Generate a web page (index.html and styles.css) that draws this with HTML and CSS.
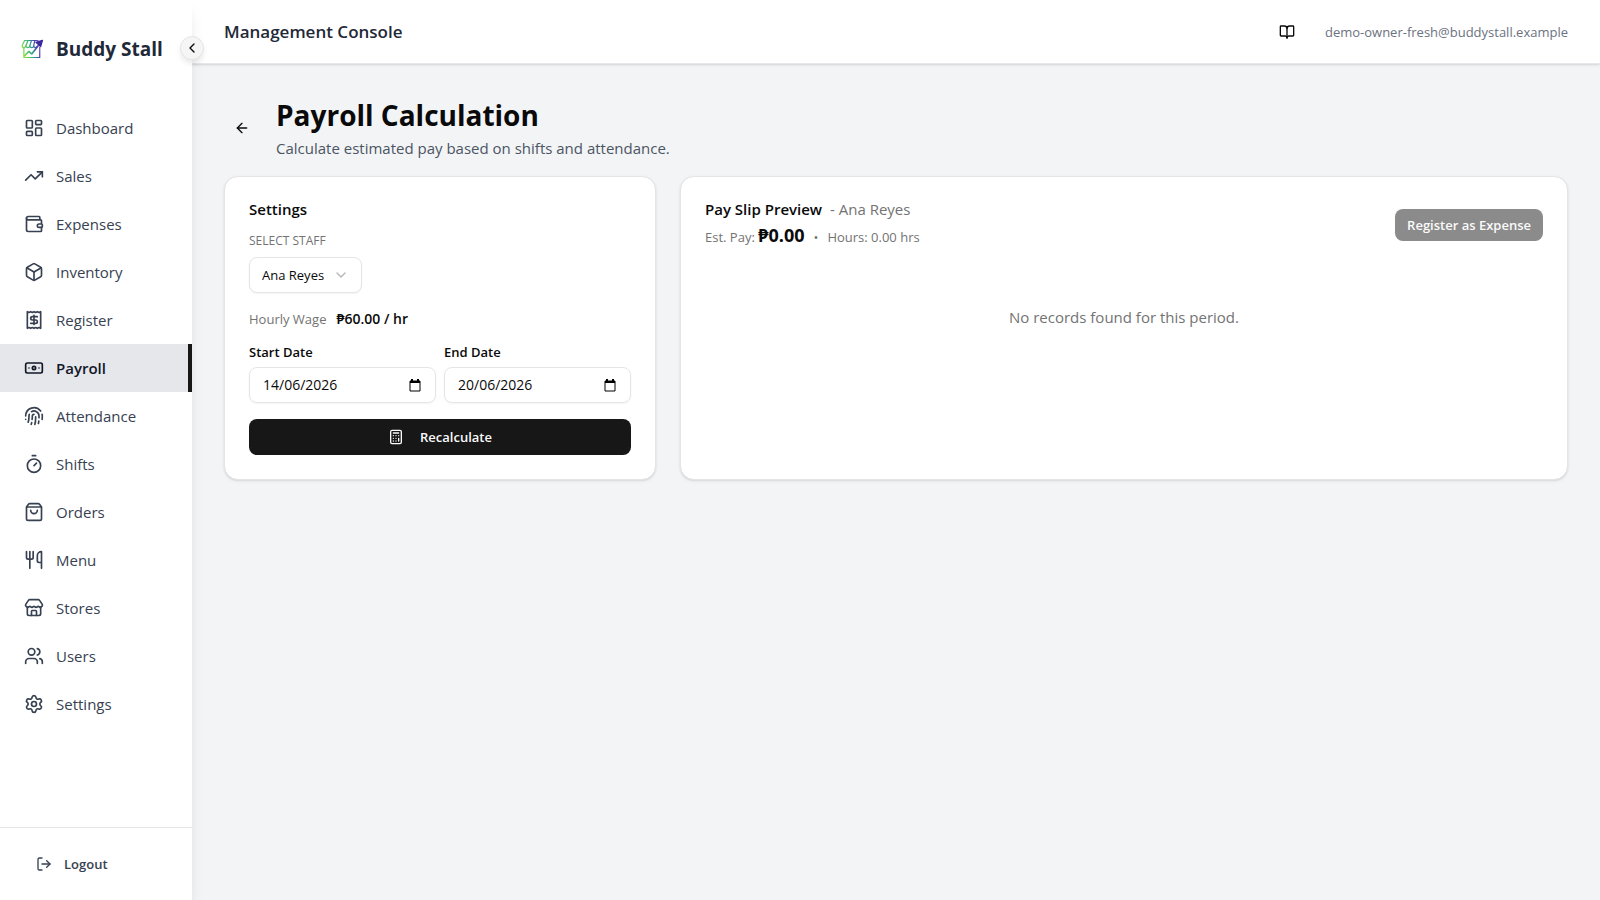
FILE: index.html
```html
<!DOCTYPE html>
<html lang="en">
<head>
    <meta charset="UTF-8">
    <meta name="viewport" content="width=device-width, initial-scale=1.0">
    <title>Payroll Calculation - Buddy Stall</title>
    <link rel="stylesheet" href="styles.css">
</head>
<body>
    <aside class="sidebar">
        <div class="brand">
            <svg class="brand-logo" viewBox="-2 -1 26 26" fill="none" stroke="url(#brandGradient)" stroke-width="1.3" stroke-linecap="round" stroke-linejoin="round">
                <defs>
                    <linearGradient id="brandGradient" gradientUnits="userSpaceOnUse" x1="1" y1="16" x2="22" y2="10">
                        <stop offset="0" stop-color="#8be03c"/>
                        <stop offset="0.45" stop-color="#2fa88c"/>
                        <stop offset="0.75" stop-color="#4b3bb0"/>
                        <stop offset="1" stop-color="#8b5fd0"/>
                    </linearGradient>
                </defs>
                <path d="M3 2.8h14.5M3 2.8.3 8.2c0 3 3.6 3 4.2 0 0 3 4 3 4.2 0 0 3 4 3 4.2 0 .2 3 3 3 3.4 1"/>
                <path d="M6.6 2.8 4.5 8.2M10.4 2.8 8.7 8.2M14 2.8l-1.1 5.4"/>
                <path d="M2.2 11v10.2h17.2V10"/>
                <path d="m2.8 19.5 4.7-4.8 3.2 2.6 8.6-11" stroke-width="1.8"/>
                <path d="m22.4 2.6-7.2 2.2 5.2 4.5z" fill="#3a2a9c" stroke="#3a2a9c"/>
            </svg>
            <span class="brand-name">Buddy Stall</span>
        </div>
        <button class="collapse-button" type="button" aria-label="Collapse sidebar">
            <svg class="icon icon-small" viewBox="0 0 24 24"><path d="m15 18-6-6 6-6"/></svg>
        </button>

        <nav class="nav">
            <a class="nav-item" href="#">
                <svg class="icon" viewBox="0 0 24 24"><rect width="7" height="9" x="3" y="3" rx="1"/><rect width="7" height="5" x="14" y="3" rx="1"/><rect width="7" height="9" x="14" y="12" rx="1"/><rect width="7" height="5" x="3" y="16" rx="1"/></svg>
                <span>Dashboard</span>
            </a>
            <a class="nav-item" href="#">
                <svg class="icon" viewBox="0 0 24 24"><path d="M16 7h6v6"/><path d="m22 7-8.5 8.5-5-5L2 17"/></svg>
                <span>Sales</span>
            </a>
            <a class="nav-item" href="#">
                <svg class="icon" viewBox="0 0 24 24"><path d="M19 7V4a1 1 0 0 0-1-1H5a2 2 0 0 0 0 4h15a1 1 0 0 1 1 1v4h-3a2 2 0 0 0 0 4h3a1 1 0 0 0 1-1v-2a1 1 0 0 0-1-1"/><path d="M3 5v14a2 2 0 0 0 2 2h15a1 1 0 0 0 1-1v-4"/></svg>
                <span>Expenses</span>
            </a>
            <a class="nav-item" href="#">
                <svg class="icon" viewBox="0 0 24 24"><path d="M21 8a2 2 0 0 0-1-1.73l-7-4a2 2 0 0 0-2 0l-7 4A2 2 0 0 0 3 8v8a2 2 0 0 0 1 1.73l7 4a2 2 0 0 0 2 0l7-4A2 2 0 0 0 21 16Z"/><path d="m3.3 7 8.7 5 8.7-5"/><path d="M12 22V12"/></svg>
                <span>Inventory</span>
            </a>
            <a class="nav-item" href="#">
                <svg class="icon" viewBox="0 0 24 24"><path d="M4 2v20l2-1 2 1 2-1 2 1 2-1 2 1 2-1 2 1V2l-2 1-2-1-2 1-2-1-2 1-2-1-2 1Z"/><path d="M16 8h-6a2 2 0 1 0 0 4h4a2 2 0 1 1 0 4H8"/><path d="M12 17.5v-11"/></svg>
                <span>Register</span>
            </a>
            <a class="nav-item active" href="#">
                <svg class="icon" viewBox="0 0 24 24"><rect width="20" height="12" x="2" y="6" rx="2"/><circle cx="12" cy="12" r="2"/><path d="M6 12h.01M18 12h.01"/></svg>
                <span>Payroll</span>
            </a>
            <a class="nav-item" href="#">
                <svg class="icon" viewBox="0 0 24 24"><path d="M12 10a2 2 0 0 0-2 2c0 1.02-.1 2.51-.26 4"/><path d="M14 13.12c0 2.38 0 6.38-1 8.88"/><path d="M17.29 21.02c.12-.6.43-2.3.5-3.02"/><path d="M2 12a10 10 0 0 1 18-6"/><path d="M2 16h.01"/><path d="M21.8 16c.2-2 .131-5.354 0-6"/><path d="M5 19.5C5.5 18 6 15 6 12a6 6 0 0 1 .34-2"/><path d="M8.65 22c.21-.66.45-1.32.57-2"/><path d="M9 6.8a6 6 0 0 1 9 5.2v2"/></svg>
                <span>Attendance</span>
            </a>
            <a class="nav-item" href="#">
                <svg class="icon" viewBox="0 0 24 24"><path d="M10 2h4"/><path d="m12 14 3-3"/><circle cx="12" cy="14" r="8"/></svg>
                <span>Shifts</span>
            </a>
            <a class="nav-item" href="#">
                <svg class="icon" viewBox="0 0 24 24"><path d="M16 10a4 4 0 0 1-8 0"/><path d="M3.103 6.034h17.794"/><path d="M3.4 5.467a2 2 0 0 0-.4 1.2V20a2 2 0 0 0 2 2h14a2 2 0 0 0 2-2V6.667a2 2 0 0 0-.4-1.2l-2-2.667A2 2 0 0 0 17 2H7a2 2 0 0 0-1.6.8z"/></svg>
                <span>Orders</span>
            </a>
            <a class="nav-item" href="#">
                <svg class="icon" viewBox="0 0 24 24"><path d="M3 2v7c0 1.1.9 2 2 2h4a2 2 0 0 0 2-2V2"/><path d="M7 2v20"/><path d="M21 15V2a5 5 0 0 0-5 5v6c0 1.1.9 2 2 2h3Zm0 0v7"/></svg>
                <span>Menu</span>
            </a>
            <a class="nav-item" href="#">
                <svg class="icon" viewBox="0 0 24 24"><path d="M15 21v-5a1 1 0 0 0-1-1h-4a1 1 0 0 0-1 1v5"/><path d="M17.774 10.31a1.12 1.12 0 0 0-1.549 0 2.5 2.5 0 0 1-3.451 0 1.12 1.12 0 0 0-1.548 0 2.5 2.5 0 0 1-3.452 0 1.12 1.12 0 0 0-1.549 0 2.5 2.5 0 0 1-3.77-3.248l2.889-4.184A2 2 0 0 1 7 2h10a2 2 0 0 1 1.653.873l2.895 4.192a2.5 2.5 0 0 1-3.774 3.244"/><path d="M4 10.95V19a2 2 0 0 0 2 2h12a2 2 0 0 0 2-2v-8.05"/></svg>
                <span>Stores</span>
            </a>
            <a class="nav-item" href="#">
                <svg class="icon" viewBox="0 0 24 24"><path d="M16 21v-2a4 4 0 0 0-4-4H6a4 4 0 0 0-4 4v2"/><path d="M16 3.128a4 4 0 0 1 0 7.744"/><path d="M22 21v-2a4 4 0 0 0-3-3.87"/><circle cx="9" cy="7" r="4"/></svg>
                <span>Users</span>
            </a>
            <a class="nav-item" href="#">
                <svg class="icon" viewBox="0 0 24 24"><path d="M9.671 4.136a2.34 2.34 0 0 1 4.659 0 2.34 2.34 0 0 0 3.319 1.915 2.34 2.34 0 0 1 2.33 4.033 2.34 2.34 0 0 0 0 3.831 2.34 2.34 0 0 1-2.33 4.033 2.34 2.34 0 0 0-3.319 1.915 2.34 2.34 0 0 1-4.659 0 2.34 2.34 0 0 0-3.32-1.915 2.34 2.34 0 0 1-2.33-4.033 2.34 2.34 0 0 0 0-3.831A2.34 2.34 0 0 1 6.35 6.051a2.34 2.34 0 0 0 3.319-1.915"/><circle cx="12" cy="12" r="3"/></svg>
                <span>Settings</span>
            </a>
        </nav>

        <div class="sidebar-footer">
            <button class="logout-button" type="button">
                <svg class="icon icon-small" viewBox="0 0 24 24"><path d="m16 17 5-5-5-5"/><path d="M21 12H9"/><path d="M9 21H5a2 2 0 0 1-2-2V5a2 2 0 0 1 2-2h4"/></svg>
                Logout
            </button>
        </div>
    </aside>

    <div class="content">
        <header class="topbar">
            <h2>Management Console</h2>
            <div class="topbar-user">
                <button class="icon-button" type="button" aria-label="Guide">
                    <svg class="icon icon-small" viewBox="0 0 24 24"><path d="M12 7v14"/><path d="M3 18a1 1 0 0 1-1-1V4a1 1 0 0 1 1-1h5a4 4 0 0 1 4 4 4 4 0 0 1 4-4h5a1 1 0 0 1 1 1v13a1 1 0 0 1-1 1h-6a3 3 0 0 0-3 3 3 3 0 0 0-3-3z"/></svg>
                </button>
                <span class="user-email">demo-owner-fresh@buddystall.example</span>
            </div>
        </header>

        <main>
            <div class="page-header">
                <button class="icon-button" type="button" aria-label="Back">
                    <svg class="icon icon-small" viewBox="0 0 24 24"><path d="m12 19-7-7 7-7"/><path d="M19 12H5"/></svg>
                </button>
                <div>
                    <h1>Payroll Calculation</h1>
                    <p>Calculate estimated pay based on shifts and attendance.</p>
                </div>
            </div>

            <div class="cards">
                <section class="card">
                    <form class="settings-form">
                        <h3>Settings</h3>
                        <div class="field">
                            <label class="staff-label" for="staff">SELECT STAFF</label>
                            <div class="select-wrap">
                                <select id="staff" name="staff">
                                    <option>Ana Reyes</option>
                                </select>
                                <svg class="icon icon-small select-arrow" viewBox="0 0 24 24"><path d="m6 9 6 6 6-6"/></svg>
                            </div>
                        </div>
                        <div class="wage"><span>Hourly Wage</span><strong>₱60.00 / hr</strong></div>
                        <div class="dates">
                            <div class="field">
                                <label for="startDate">Start Date</label>
                                <div class="date-box">
                                    <input type="text" id="startDate" name="startDate" value="14/06/2026">
                                    <svg class="calendar" viewBox="0 0 12 13"><path d="M1 2h10v10H1z"/><path d="M1 3h10M3 0v2M9 0v2" stroke-width="2"/></svg>
                                </div>
                            </div>
                            <div class="field">
                                <label for="endDate">End Date</label>
                                <div class="date-box">
                                    <input type="text" id="endDate" name="endDate" value="20/06/2026">
                                    <svg class="calendar" viewBox="0 0 12 13"><path d="M1 2h10v10H1z"/><path d="M1 3h10M3 0v2M9 0v2" stroke-width="2"/></svg>
                                </div>
                            </div>
                        </div>
                        <button class="primary-button" type="button">
                            <svg class="icon icon-small" viewBox="0 0 24 24"><rect width="16" height="20" x="4" y="2" rx="2"/><path d="M8 6h8M16 14v4M16 10h.01M12 10h.01M8 10h.01M12 14h.01M8 14h.01M12 18h.01M8 18h.01"/></svg>
                            Recalculate
                        </button>
                    </form>
                </section>

                <section class="card">
                    <div class="payslip-header">
                        <div>
                            <h3>Pay Slip Preview <span class="staff-name">- Ana Reyes</span></h3>
                            <p class="totals"><span>Est. Pay: <strong>₱0.00</strong></span><span>•</span><span>Hours: 0.00 hrs</span></p>
                        </div>
                        <button class="expense-button" type="button" disabled>Register as Expense</button>
                    </div>
                    <p class="empty">No records found for this period.</p>
                </section>
            </div>
        </main>
    </div>
</body>
</html>
```
FILE: styles.css
```css
* {
    box-sizing: border-box;
}
body {
    margin: 0;
    min-height: 100vh;
    display: flex;
    font-family: "Open Sans", "Noto Sans", sans-serif;
    font-size: 15px;
    line-height: 24px;
    color: #0a0a0a;
    background-color: #f3f4f6;
}
h1, h2, h3, p {
    margin: 0;
}
button, input, select {
    font: inherit;
    color: inherit;
}
button {
    display: flex;
    align-items: center;
    justify-content: center;
    padding: 0;
    border: none;
    background: none;
    cursor: pointer;
}
.icon {
    width: 20px;
    height: 20px;
    flex-shrink: 0;
    fill: none;
    stroke: currentColor;
    stroke-width: 2;
    stroke-linecap: round;
    stroke-linejoin: round;
}
.icon-small {
    width: 16px;
    height: 16px;
}

/* Sidebar */
.sidebar {
    position: relative;
    z-index: 1;
    width: 192px;
    flex-shrink: 0;
    display: flex;
    flex-direction: column;
    background-color: #fff;
    box-shadow: 0 10px 15px -3px rgba(0, 0, 0, 0.1), 0 4px 6px -4px rgba(0, 0, 0, 0.1);
}
.brand {
    display: flex;
    align-items: center;
    gap: 12px;
    height: 98px;
    padding-left: 20px;
}
.brand-logo {
    width: 24px;
    height: 24px;
}
.brand-name {
    font-size: 19px;
    font-weight: 700;
    color: #1f2937;
}
.collapse-button {
    position: absolute;
    top: 36px;
    right: -12px;
    width: 24px;
    height: 24px;
    border: 1px solid #e5e5e5;
    border-radius: 50%;
    background-color: #f5f5f5;
    box-shadow: 0 4px 6px -1px rgba(0, 0, 0, 0.1);
}
.nav {
    flex: 1;
    padding-top: 6px;
}
.nav-item {
    display: flex;
    align-items: center;
    gap: 12px;
    height: 48px;
    padding-left: 24px;
    color: #374151;
    text-decoration: none;
}
.nav-item.active {
    background-color: #e5e7eb;
    border-right: 4px solid #171717;
    color: #111827;
    font-weight: 600;
}
.sidebar-footer {
    display: flex;
    align-items: center;
    height: 73px;
    padding-left: 36px;
    border-top: 1px solid #e5e7eb;
}
.logout-button {
    gap: 12px;
    font-size: 13px;
    font-weight: 600;
    color: #374151;
}

/* Top bar */
.content {
    flex: 1;
    min-width: 0;
}
.topbar {
    display: flex;
    align-items: center;
    justify-content: space-between;
    height: 64px;
    padding: 0 32px;
    background-color: #fff;
    border-bottom: 1px solid #e5e7eb;
    box-shadow: 0 1px 3px rgba(0, 0, 0, 0.1), 0 1px 2px -1px rgba(0, 0, 0, 0.1);
}
.topbar h2 {
    font-size: 17px;
    font-weight: 600;
    line-height: 28px;
    color: #1f2937;
}
.topbar-user {
    display: flex;
    align-items: center;
    gap: 20px;
}
.icon-button {
    width: 36px;
    height: 36px;
}
.user-email {
    font-size: 13px;
    color: #6b7280;
}

/* Page */
main {
    padding: 32px;
}
.page-header {
    display: flex;
    align-items: center;
    gap: 16px;
    margin-bottom: 16px;
}
.page-header h1 {
    margin-bottom: 2px;
    font-size: 28px;
    font-weight: 700;
    line-height: 38px;
}
.page-header p {
    color: #4b5563;
}
.cards {
    display: grid;
    grid-template-columns: repeat(3, minmax(0, 1fr));
    gap: 24px;
}
.card {
    padding: 24px;
    border: 1px solid #e5e5e5;
    border-radius: 14px;
    background-color: #fff;
    box-shadow: 0 1px 3px rgba(0, 0, 0, 0.1), 0 1px 2px -1px rgba(0, 0, 0, 0.1);
}
.card + .card {
    grid-column: span 2;
}
.card h3 {
    font-size: 15px;
    font-weight: 600;
    line-height: 16px;
}

/* Settings form */
.settings-form {
    display: flex;
    flex-direction: column;
    gap: 16px;
}
.field {
    display: flex;
    flex-direction: column;
    gap: 8px;
}
.field label {
    font-size: 13px;
    font-weight: 600;
    line-height: 14px;
}
.field .staff-label {
    font-size: 12px;
    font-weight: 400;
    line-height: 16px;
    color: #737373;
}
.select-wrap {
    position: relative;
    align-self: flex-start;
}
.select-wrap select {
    appearance: none;
    height: 36px;
    padding: 0 36px 0 12px;
    border: 1px solid #e5e5e5;
    border-radius: 8px;
    background-color: #fff;
    font-size: 13px;
    box-shadow: 0 1px 2px rgba(0, 0, 0, 0.05);
}
.select-arrow {
    position: absolute;
    top: 10px;
    right: 13px;
    color: #b5b5b5;
    pointer-events: none;
}
.wage {
    display: flex;
    gap: 10px;
    font-size: 13px;
    line-height: 20px;
}
.wage span {
    color: #737373;
}
.wage strong {
    font-size: 14px;
    font-weight: 600;
    color: #0a0a0a;
}
.dates {
    display: grid;
    grid-template-columns: repeat(2, minmax(0, 1fr));
    gap: 8px;
}
.date-box {
    display: flex;
    align-items: center;
    height: 36px;
    padding: 0 14px 0 13px;
    border: 1px solid #e5e5e5;
    border-radius: 8px;
    box-shadow: 0 1px 2px rgba(0, 0, 0, 0.05);
}
.date-box input {
    flex: 1;
    min-width: 0;
    padding: 0;
    border: none;
    outline: none;
    background: none;
    font-size: 14px;
}
.calendar {
    width: 12px;
    height: 13px;
    flex-shrink: 0;
    fill: none;
    stroke: #000;
}
.primary-button {
    gap: 16px;
    height: 36px;
    border-radius: 8px;
    background-color: #171717;
    color: #fafafa;
    font-size: 13px;
    font-weight: 600;
}

/* Pay slip */
.payslip-header {
    display: flex;
    align-items: flex-start;
    justify-content: space-between;
    height: 48px;
    margin-bottom: 56px;
}
.staff-name {
    margin-left: 4px;
    font-weight: 400;
    color: #737373;
}
.totals {
    display: flex;
    align-items: baseline;
    gap: 9px;
    margin-top: 4px;
    font-size: 13px;
    line-height: 28px;
    color: #737373;
}
.totals strong {
    font-size: 18px;
    color: #0a0a0a;
}
.expense-button {
    height: 32px;
    margin-top: 8px;
    padding: 0 12px;
    border-radius: 8px;
    background-color: #8b8b8b;
    color: #fafafa;
    font-size: 13px;
    font-weight: 600;
}
.empty {
    text-align: center;
    color: #737373;
}
```
